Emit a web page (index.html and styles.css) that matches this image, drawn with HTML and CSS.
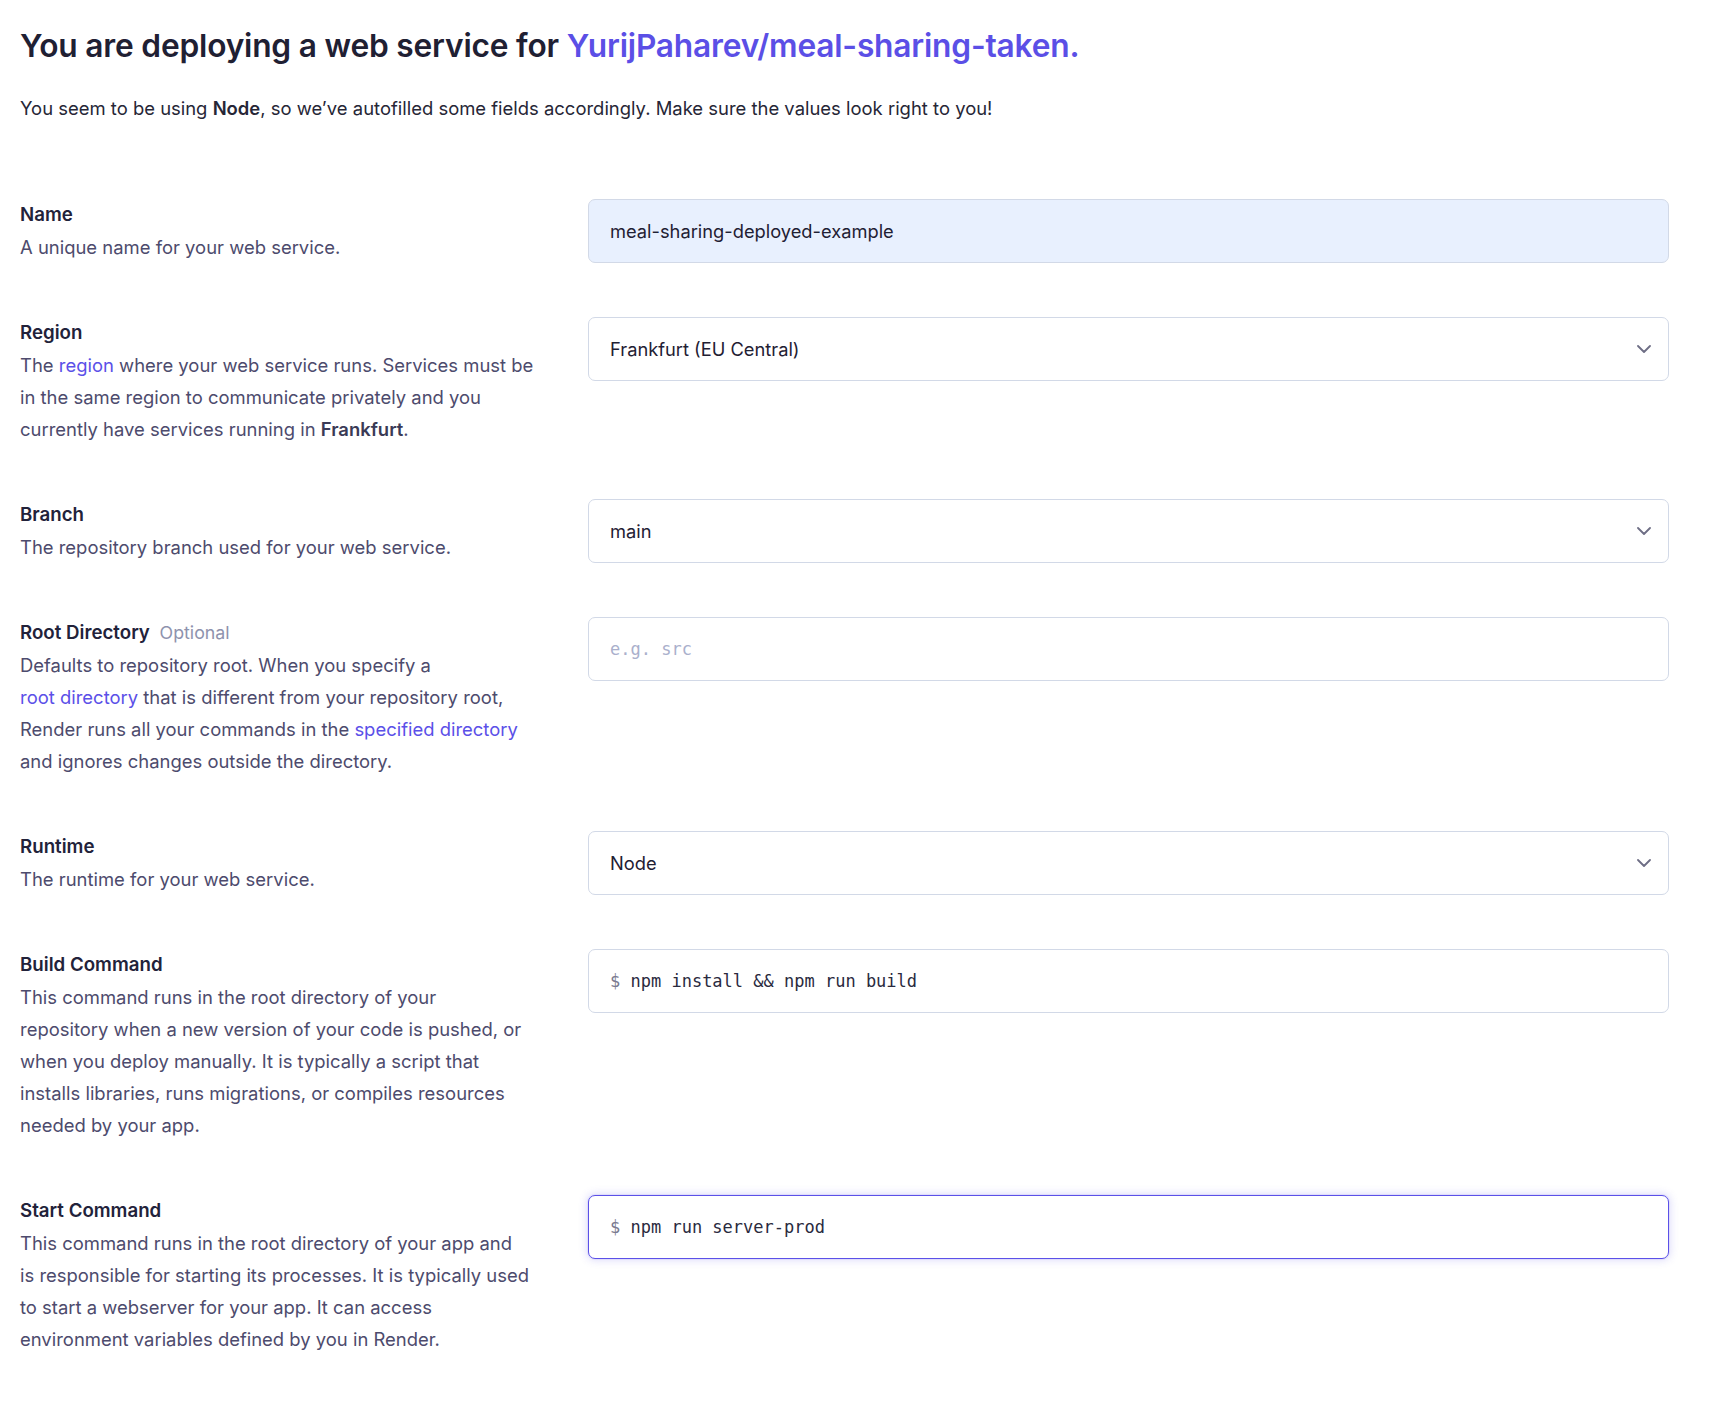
FILE: index.html
```html
<!DOCTYPE html>
<html>
<head>
<meta charset="utf-8">
<link rel="stylesheet" href="styles.css">
</head>
<body>
<main class="page">
  <h1 class="title">You are deploying a web service for <a class="repo" href="#">YurijPaharev/meal-sharing-taken.</a></h1>
  <p class="intro">You seem to be using <strong>Node</strong>, so we’ve autofilled some fields accordingly. Make sure the values look right to you!</p>

  <div class="form">
    <div class="row">
      <div class="info">
        <div class="label">Name</div>
        <div class="desc">A unique name for your web service.</div>
      </div>
      <div class="field"><div class="input autofill">meal-sharing-deployed-example</div></div>
    </div>

    <div class="row">
      <div class="info">
        <div class="label">Region</div>
        <div class="desc">The <a href="#">region</a> where your web service runs. Services must be<br>in the same region to communicate privately and you<br>currently have services running in <strong>Frankfurt</strong>.</div>
      </div>
      <div class="field"><div class="input select">Frankfurt (EU Central)<svg class="chev" viewBox="0 0 14 8" width="14" height="8"><path d="M1 1l6 6 6-6" fill="none" stroke="#6e6e85" stroke-width="1.8" stroke-linecap="round" stroke-linejoin="round"/></svg></div></div>
    </div>

    <div class="row">
      <div class="info">
        <div class="label">Branch</div>
        <div class="desc">The repository branch used for your web service.</div>
      </div>
      <div class="field"><div class="input select">main<svg class="chev" viewBox="0 0 14 8" width="14" height="8"><path d="M1 1l6 6 6-6" fill="none" stroke="#6e6e85" stroke-width="1.8" stroke-linecap="round" stroke-linejoin="round"/></svg></div></div>
    </div>

    <div class="row">
      <div class="info">
        <div class="label">Root Directory <span class="optional">Optional</span></div>
        <div class="desc">Defaults to repository root. When you specify a<br><a href="#">root directory</a> that is different from your repository root,<br>Render runs all your commands in the <a href="#">specified directory</a><br>and ignores changes outside the directory.</div>
      </div>
      <div class="field"><div class="input mono placeholder">e.g. src</div></div>
    </div>

    <div class="row">
      <div class="info">
        <div class="label">Runtime</div>
        <div class="desc">The runtime for your web service.</div>
      </div>
      <div class="field"><div class="input select">Node<svg class="chev" viewBox="0 0 14 8" width="14" height="8"><path d="M1 1l6 6 6-6" fill="none" stroke="#6e6e85" stroke-width="1.8" stroke-linecap="round" stroke-linejoin="round"/></svg></div></div>
    </div>

    <div class="row">
      <div class="info">
        <div class="label">Build Command</div>
        <div class="desc">This command runs in the root directory of your<br>repository when a new version of your code is pushed, or<br>when you deploy manually. It is typically a script that<br>installs libraries, runs migrations, or compiles resources<br>needed by your app.</div>
      </div>
      <div class="field"><div class="input mono"><span class="dollar">$</span> npm install &amp;&amp; npm run build</div></div>
    </div>

    <div class="row">
      <div class="info">
        <div class="label">Start Command</div>
        <div class="desc">This command runs in the root directory of your app and<br>is responsible for starting its processes. It is typically used<br>to start a webserver for your app. It can access<br>environment variables defined by you in Render.</div>
      </div>
      <div class="field"><div class="input mono focused"><span class="dollar">$</span> npm run server-prod</div></div>
    </div>
  </div>
</main>
</body>
</html>
```

FILE: styles.css
```css
* { box-sizing: border-box; }
html, body { margin: 0; padding: 0; background: #ffffff; }
body {
  font-family: "Inter", "Liberation Sans", sans-serif;
  color: #1f2033;
}
.page {
  width: 1669px;
  padding: 24px 0 60px 20px;
}
.title {
  margin: 0;
  font-size: 31.7px;
  line-height: 44px;
  font-weight: 600;
  letter-spacing: -0.2px;
  color: #1f2033;
}
.repo { color: #5b4fe6; text-decoration: none; }
.intro {
  margin: 24px 0 0;
  font-size: 18.45px;
  line-height: 32px;
  color: #262636;
}
.intro strong { font-weight: 600; }
.form {
  margin-top: 75px;
  display: flex;
  flex-direction: column;
  gap: 54px;
}
.row {
  display: grid;
  grid-template-columns: 536px 1fr;
  column-gap: 32px;
  align-items: start;
}
.info { width: 536px; }
.label {
  font-size: 18.7px;
  line-height: 32px;
  font-weight: 600;
  color: #22223a;
}
.optional {
  font-weight: 400;
  color: #8e92ad;
  margin-left: 5px;
  font-size: 17.8px;
}
.desc {
  font-size: 18.45px;
  line-height: 32px;
  color: #4d4b6d;
}
.desc a { color: #5b50e8; text-decoration: none; white-space: nowrap; }
.desc strong { font-weight: 600; color: #3a3a56; }
.input {
  height: 64px;
  border: 1px solid #d2d9e7;
  border-radius: 7px;
  padding: 0 21px;
  display: flex;
  align-items: center;
  font-size: 18.3px;
  color: #1f2033;
  background: #fff;
}
.autofill { background: #e8f0fe; }
.select { justify-content: space-between; padding-right: 17px; }
.chev { display: block; }
.mono {
  font-family: "DejaVu Sans Mono", "Liberation Mono", monospace;
  font-size: 17px;
  color: #2a2a3e;
  white-space: pre;
}
.placeholder { color: #aab0cc; }
.dollar { color: #7b7b8f; }
.focused {
  border-color: #5b50e8;
  box-shadow: 0 0 0 1px rgba(91, 80, 232, 0.08), 0 0 8px 1px rgba(91, 80, 232, 0.22);
}
```
